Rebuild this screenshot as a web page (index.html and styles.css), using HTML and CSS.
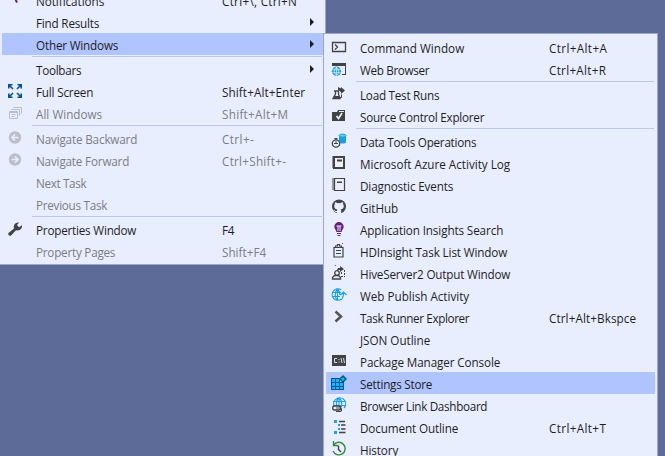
FILE: index.html
```html
<!DOCTYPE html>
<html lang="en">
<head>
<meta charset="utf-8">
<title>View menu</title>
<link rel="stylesheet" href="styles.css">
</head>
<body>
<nav class="menu main-menu" id="main"></nav>
<nav class="menu submenu" id="sub"></nav>
<script src="menu.js"></script>
</body>
</html>
```
FILE: styles.css
```css
* { box-sizing: border-box; }
body {
  margin: 0;
  width: 665px;
  height: 456px;
  overflow: hidden;
  position: relative;
  background: #5d6b99;
  font: 11.7px/22px "Open Sans", "Noto Sans", sans-serif;
  color: #1e1e1e;
}
.menu {
  position: absolute;
  background: #e9eefe;
  border: 1px solid #9ba7d0;
  padding: 2px;
}
.main-menu {
  left: -1px;
  top: -14px;
  width: 327px;
  height: 279px;
}
.submenu {
  left: 323px;
  top: 33px;
  width: 335px;
  height: 440px;
}
.row {
  display: grid;
  grid-template-columns: 34px 186px 1fr 15px;
  height: 22px;
  white-space: nowrap;
}
.submenu .row { grid-template-columns: 34px 189px 1fr 4px; }
.row.selected { background: #b0c4ff; }
.row.disabled { color: #7b7d83; }
.text { padding-top: 1px; height: 22px; }
.icon { padding: 3px 0 0 5px; line-height: 0; }
.arrow { padding: 7px 0 0 2px; line-height: 0; }
.separator {
  height: 1px;
  margin: 1px 1px 1px 30px;
  background: #bec8e9;
}
svg { overflow: visible; }
```
FILE: menu.js
```js
const D = '#424242', B = '#1ba1e2', G = '#bcbec8';
const icons = {
  bell: `<path d="M8.500 1.500L7.300 5L10 10.500" fill="none" stroke="#68217a" stroke-width="2"/>`,
  full: `<g fill="none" stroke="#00539c" stroke-width="1.6"><path d="M1.800 5.500V1.800H5.500M2 2l4 4M10.500 1.800h3.700v3.700M14 2l-4 4M1.800 10.500v3.700h3.700M2 14l4-4M14.200 10.500v3.700h-3.700M14 14l-4-4"/></g>`,
  windows: `<g fill="none" stroke="${G}"><path d="M6.500 3V2.500h8v6H14M4.500 5V4.500h8v6H12M2.500 6.500h8v7h-8zM2 7.500h9M4.500 9.500h4M4.500 11.500h3"/></g>`,
  back: `<circle cx="8" cy="7.500" r="6.200" fill="${G}"/><path d="M11.500 7.500H5M8 4.500l-3 3 3 3" fill="none" stroke="#e9eefe" stroke-width="1.700"/>`,
  forward: `<circle cx="8" cy="7.500" r="6.200" fill="${G}"/><path d="M4.500 7.500H11M8 4.500l3 3-3 3" fill="none" stroke="#e9eefe" stroke-width="1.700"/>`,
  wrench: `<path d="M1.500 12L7 7.500C6 4 8.500 1 12 1.500L10 4l2 2.200 3-2c.5 3.500-2.500 6-6 5L4 14.500c-1.800 1-3.500-1-2.500-2.500z" fill="${D}"/>`,
  command: `<path d="M1.500 3.500h13v9h-13zM4 5.500L6.500 8 4 10.500" fill="none" stroke="${D}" stroke-width="1.300"/>`,
  browser: `<path d="M1 2h14v12h-4v-1h3V5H1z" fill="${D}"/><circle cx="5.500" cy="10.200" r="4.700" fill="${B}"/><path d="M1 8.700h9M1 11.700h9M5.500 6v8.500M5.500 6c-3 3-3 5.500 0 8.500M5.500 6c3 3 3 5.500 0 8.500" fill="none" stroke="#e9eefe" stroke-width=".7"/>`,
  test: `<path d="M3 5h5M4.500 5v3L2 12.500h7L7.500 8V5" fill="none" stroke="${D}" stroke-width="1.300"/><path d="M3 10h5l1 3H2zM7 1l3 1.500V1l4 3.500L10 8V6L7 4z" fill="${D}"/><path d="M9 11.500h1.500V8.500" fill="none" stroke="${D}"/>`,
  source: `<path d="M1 4h5l1-2h7v11H1z" fill="${D}"/><path d="M8 3.500h5" stroke="#e9eefe"/><path d="M5.500 8L7.500 10.500l3.500-5.500" fill="none" stroke="#e9eefe" stroke-width="1.700"/>`,
  data: `<path d="M8 2.500v7c1 1.300 6 1.300 7 0v-7z" fill="${B}"/><ellipse cx="11.500" cy="2.600" rx="3.500" ry="1.500" fill="#74c8ef" stroke="${B}"/><circle cx="5" cy="10.500" r="3.700" fill="#e9eefe" stroke="${D}" stroke-width="1.300"/><path d="M3.500 5.500h3M5 5v2M5 8v3M3 10.500h4" stroke="${D}" fill="none"/>`,
  log: `<path d="M3 2h10v11H3z" fill="#f0eff1" stroke="${D}" stroke-width="2"/><path d="M2 1.500v12" stroke="${D}" stroke-width="2" stroke-dasharray="1 1"/><path d="M6 4.500h5v2H6z" fill="${D}"/>`,
  diagnostic: `<path d="M3.500 1.500h10v12h-10z" fill="#eeeefa" stroke="${D}" stroke-width="1.200"/><path d="M2 1.500v12" stroke="${D}" stroke-width="2" stroke-dasharray="1 1"/><path d="M6 4.500h5v1.500H6z" fill="${D}"/>`,
  github: `<circle cx="8" cy="7.500" r="7" fill="${D}"/><path d="M4 3.300c1 0 1.900.4 2.500.9a7 7 0 0 1 3 0c.6-.5 1.500-.9 2.500-.9.300.7.300 1.300.1 1.900.5.600.7 1.200.7 2 0 2-1.200 3-3.300 3.300.5.500.7 1 .7 1.600V15H5.800v-2c-1.400.3-2.200-.2-2.700-1.300-.2-.5-.5-.7-.9-1 1.200-.2 1.700.6 2.200 1.200.4.400 1 .3 1.500.1 0-.6.200-1.100.6-1.500-2.100-.3-3.300-1.300-3.300-3.300 0-.8.200-1.400.7-2-.2-.6-.2-1.200.1-1.900z" fill="#e9eefe"/>`,
  bulb: `<path d="M8 1a4.700 4.700 0 0 1 4.700 4.700c0 2-1.700 3-2.200 5.300h-5C5 8.700 3.300 7.700 3.300 5.700A4.700 4.700 0 0 1 8 1z" fill="#68217a"/><path d="M5.500 5h5M7 5v5M9 5v5" stroke="#e9eefe"/><path d="M6 12.500h4M6.500 14.500h3" stroke="#68217a"/>`,
  clipboard: `<path d="M3 4.500h9v9.500h-9zM4.500 4V3h2V1.500h2V3h2v1M5 7.500h5M5 10.500h5" fill="none" stroke="${D}" stroke-width="1.200"/><path d="M11 .500h1" stroke="#f0f"/>`,
  hive: `<circle cx="6" cy="8" r="2.300" fill="none" stroke="${D}" stroke-width="1.300"/><path d="M1.500 14v-1.500l2-2h4l2 2V14z" fill="none" stroke="${D}" stroke-width="1.300"/><path d="M7 3h2V1l4 3-4 3V5H6z" fill="${D}"/><path d="M13.500 5v7M10.500 7v3M10 11.500h4" stroke="${D}" stroke-dasharray="2 1" fill="none"/><path d="M4 .500h1" stroke="#f0f"/>`,
  publish: `<g fill="none" stroke="${B}" stroke-width="1.200"><path d="M10 2.800A5.700 5.700 0 1 0 10 12.300M1 5.500h9M1 9.500h8M6.500 2v11.500M6.500 2C3.500 5 3.500 10.500 6.500 13.500M6.500 2c2 2 2.500 4 2.300 6M9 12.800c3 0 3.500-2.500 3.500-7.300M9.500 8l3-3 3 3"/></g>`,
  chevron: `<path d="M4.500 2.500L10 7.500l-5.500 5" fill="none" stroke="#555" stroke-width="2.500"/>`,
  console: `<path d="M1 2h14v11H1z" fill="${D}"/><path d="M6 5.500H3.500v4H6M8 6v1M8 8.500v1M10 5l1 5M12.500 5l1 5" fill="none" stroke="#e9eefe" stroke-width=".9"/>`,
  settings: `<path d="M0 3h9v4h4v8H0z" fill="#00539c"/><g fill="#18b5ef"><path d="M1 4h3v3H1zM5 4h3v3H5zM1 8h3v3H1zM5 8h3v3H5zM9 8h3v3H9zM1 12h3v2H1zM5 12h3v2H5zM9 12h3v2H9z"/></g><path d="M12 1l3 3-3 3-3-3z" fill="#18b5ef" stroke="#005987" stroke-width="1.500"/>`,
  link: `<g fill="none" stroke="${B}" stroke-width="1.200"><path d="M3 9A6 6 0 1 1 13 11M2 4.500h12M2 8.500h12M8 1v8M8 1C5 3 5 6 5.500 9M8 1c3 2 3 6 2.500 9"/></g><rect x="1.700" y="9" width="8" height="4" rx="2" fill="#e9eefe" stroke="${D}" stroke-width="1.300"/><path d="M5 11h4.500a2 2 0 0 1 0 3.500H5" fill="none" stroke="${D}" stroke-width="1.200"/>`,
  outline: `<path d="M3 1h3v3H3zM7 5h2v2H7zM7 9h2v2H7zM3 12h3v3H3z" fill="${B}"/><path d="M8 2.500h6M10 6h4.500M10 10h4.500M8 13.500h6.500" stroke="${D}" stroke-width="1.300"/>`,
  history: `<path d="M3 3.500A6.300 6.300 0 1 1 2 10M2.500 0v4.500H7" fill="none" stroke="#388a34" stroke-width="1.400"/><path d="M7.500 4.500v4l2.500 2.500" fill="none" stroke="${D}" stroke-width="1.400"/>`
};

// label, label width, shortcut, shortcut width, icon, state
const mainItems = [
  ['Notifications', 68, 'Ctrl+\\, Ctrl+N', 75, 'bell'],
  ['Find Results', 63, '>', 0],
  ['Other Windows', 82, '>', 0, '', 'selected'],
  null,
  ['Toolbars', 45, '>', 0],
  ['Full Screen', 57, 'Shift+Alt+Enter', 83, 'full'],
  ['All Windows', 66, 'Shift+Alt+M', 66, 'windows', 'disabled'],
  null,
  ['Navigate Backward', 101, 'Ctrl+-', 32, 'back', 'disabled'],
  ['Navigate Forward', 93, 'Ctrl+Shift+-', 64, 'forward', 'disabled'],
  ['Next Task', 50, '', 0, '', 'disabled'],
  ['Previous Task', 71, '', 0, '', 'disabled'],
  null,
  ['Properties Window', 100, 'F4', 12, 'wrench'],
  ['Property Pages', 79, 'Shift+F4', 44, '', 'disabled']
];
const subItems = [
  ['Command Window', 104, 'Ctrl+Alt+A', 58, 'command'],
  ['Web Browser', 69, 'Ctrl+Alt+R', 57, 'browser'],
  null,
  ['Load Test Runs', 79, '', 0, 'test'],
  ['Source Control Explorer', 124, '', 0, 'source'],
  null,
  ['Data Tools Operations', 116, '', 0, 'data'],
  ['Microsoft Azure Activity Log', 150, '', 0, 'log'],
  ['Diagnostic Events', 93, '', 0, 'diagnostic'],
  ['GitHub', 38, '', 0, 'github'],
  ['Application Insights Search', 143, '', 0, 'bulb'],
  ['HDInsight Task List Window', 147, '', 0, 'clipboard'],
  ['HiveServer2 Output Window', 150, '', 0, 'hive'],
  ['Web Publish Activity', 109, '', 0, 'publish'],
  ['Task Runner Explorer', 109, 'Ctrl+Alt+Bkspce', 87, 'chevron'],
  ['JSON Outline', 70, '', 0],
  ['Package Manager Console', 140, '', 0, 'console'],
  ['Settings Store', 72, '', 0, 'settings', 'selected'],
  ['Browser Link Dashboard', 127, '', 0, 'link'],
  ['Document Outline', 98, 'Ctrl+Alt+T', 57, 'outline'],
  ['History', 38, '', 0, 'history']
];

const svg = (body, w = 16, h = 16) => `<svg width="${w}" height="${h}" viewBox="0 0 ${w} ${h}">${body}</svg>`;

function build(id, items) {
  const menu = document.getElementById(id);
  for (const item of items) {
    const row = document.createElement('div');
    menu.append(row);
    if (!item) {
      row.className = 'separator';
      continue;
    }
    const [label, labelWidth, key, keyWidth, icon, state] = item;
    row.className = 'row ' + (state || '');
    const opens = key === '>';
    row.innerHTML = `<div class="icon">${icon ? svg(icons[icon]) : ''}</div><div class="text"><span></span></div><div class="text"><span></span></div><div class="arrow">${opens ? svg('<path d="M0 0l4 4-4 4z" fill="#1e1e1e"/>', 5, 8) : ''}</div>`;
    const spans = row.querySelectorAll('span');
    fit(spans[0], label, labelWidth);
    fit(spans[1], opens ? '' : key, keyWidth);
  }
}

function fit(span, text, width) {
  span.textContent = text;
  if (!text) return;
  const natural = span.getBoundingClientRect().width;
  span.style.letterSpacing = (width + 0.2 - natural) / text.length + 'px';
}

build('main', mainItems);
build('sub', subItems);
```
